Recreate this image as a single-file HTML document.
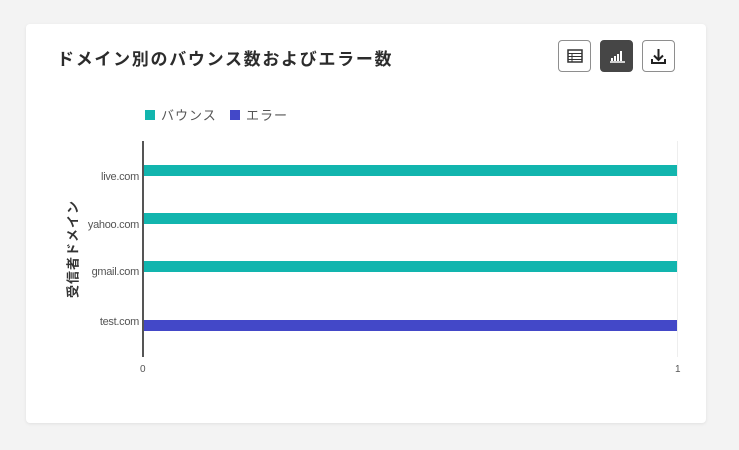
<!DOCTYPE html>
<html><head><meta charset="utf-8"><style>
body{margin:0;width:739px;height:450px;background:#f3f3f3;font-family:"Liberation Sans","Noto Sans CJK JP",sans-serif;position:relative;overflow:hidden}
.card{position:absolute;left:26px;top:24px;width:680px;height:399px;background:#fff;border-radius:4px;box-shadow:0 1px 3px rgba(0,0,0,.08)}
.t{position:absolute;left:57px;top:45px;font-size:17px;font-weight:bold;color:#2c2c2c;letter-spacing:1.7px}
.btn{position:absolute;top:40px;width:33px;height:32px;border:1px solid #8e8e8e;border-radius:4px;box-sizing:border-box;background:#fff}
.a{position:absolute;font-size:11px;color:#555}
.bar{position:absolute;left:144px;width:533px;height:11px}
</style></head><body>
<div class="card"></div>
<div class="t">ドメイン別のバウンス数およびエラー数</div>
<div class="btn" style="left:558px"><svg width="31" height="30"><rect x="9" y="9" width="14" height="12" fill="none" stroke="#333" stroke-width="1.5"/><path d="M9 12.5h14M9 15.5h14M9 18.5h14M13 12.5v8.5" stroke="#333" stroke-width="1"/></svg></div>
<div class="btn" style="left:600px;background:#464646;border-color:#464646"><svg width="33" height="32"><path d="M9 21h15" stroke="#fff" stroke-width="1.5"/><rect x="10" y="17" width="2" height="3" fill="#fff"/><rect x="13" y="15" width="2" height="5" fill="#fff"/><rect x="16" y="13" width="2" height="7" fill="#fff"/><rect x="19" y="10" width="2" height="10" fill="#fff"/></svg></div>
<div class="btn" style="left:642px"><svg width="31" height="30"><path d="M15.5 8v11M11 14.5l4.5 4.5 4.5-4.5" fill="none" stroke="#222" stroke-width="2"/><path d="M9 18v4h13v-4" fill="none" stroke="#222" stroke-width="2"/></svg></div>
<div style="position:absolute;left:145px;top:110px;width:10px;height:10px;background:#12b5ae"></div>
<div class="a" style="left:161px;top:105px;font-size:13px;color:#555;letter-spacing:1px">バウンス</div>
<div style="position:absolute;left:230px;top:110px;width:10px;height:10px;background:#4348c8"></div>
<div class="a" style="left:246px;top:105px;font-size:13px;color:#555;letter-spacing:1px">エラー</div>
<div style="position:absolute;left:677px;top:141px;width:1px;height:216px;background:#eee"></div>
<div class="bar" style="top:165px;background:#12b5ae"></div>
<div class="bar" style="top:213px;background:#12b5ae"></div>
<div class="bar" style="top:261px;background:#12b5ae"></div>
<div class="bar" style="top:320px;background:#4348c8"></div>
<div style="position:absolute;left:142px;top:141px;width:2px;height:216px;background:#555"></div>
<div class="a" style="right:600px;top:171px;letter-spacing:-0.3px">live.com</div>
<div class="a" style="right:600px;top:219px;letter-spacing:-0.3px">yahoo.com</div>
<div class="a" style="right:600px;top:266px;letter-spacing:-0.3px">gmail.com</div>
<div class="a" style="right:600px;top:316px;letter-spacing:-0.3px">test.com</div>
<div class="a" style="left:140px;top:364px;font-size:10px">0</div>
<div class="a" style="left:675px;top:364px;font-size:10px">1</div>
<div style="position:absolute;left:72px;top:249px;transform:translate(-50%,-50%) rotate(-90deg);font-size:13px;font-weight:bold;color:#333;white-space:nowrap;letter-spacing:1px">受信者ドメイン</div>
</body></html>
